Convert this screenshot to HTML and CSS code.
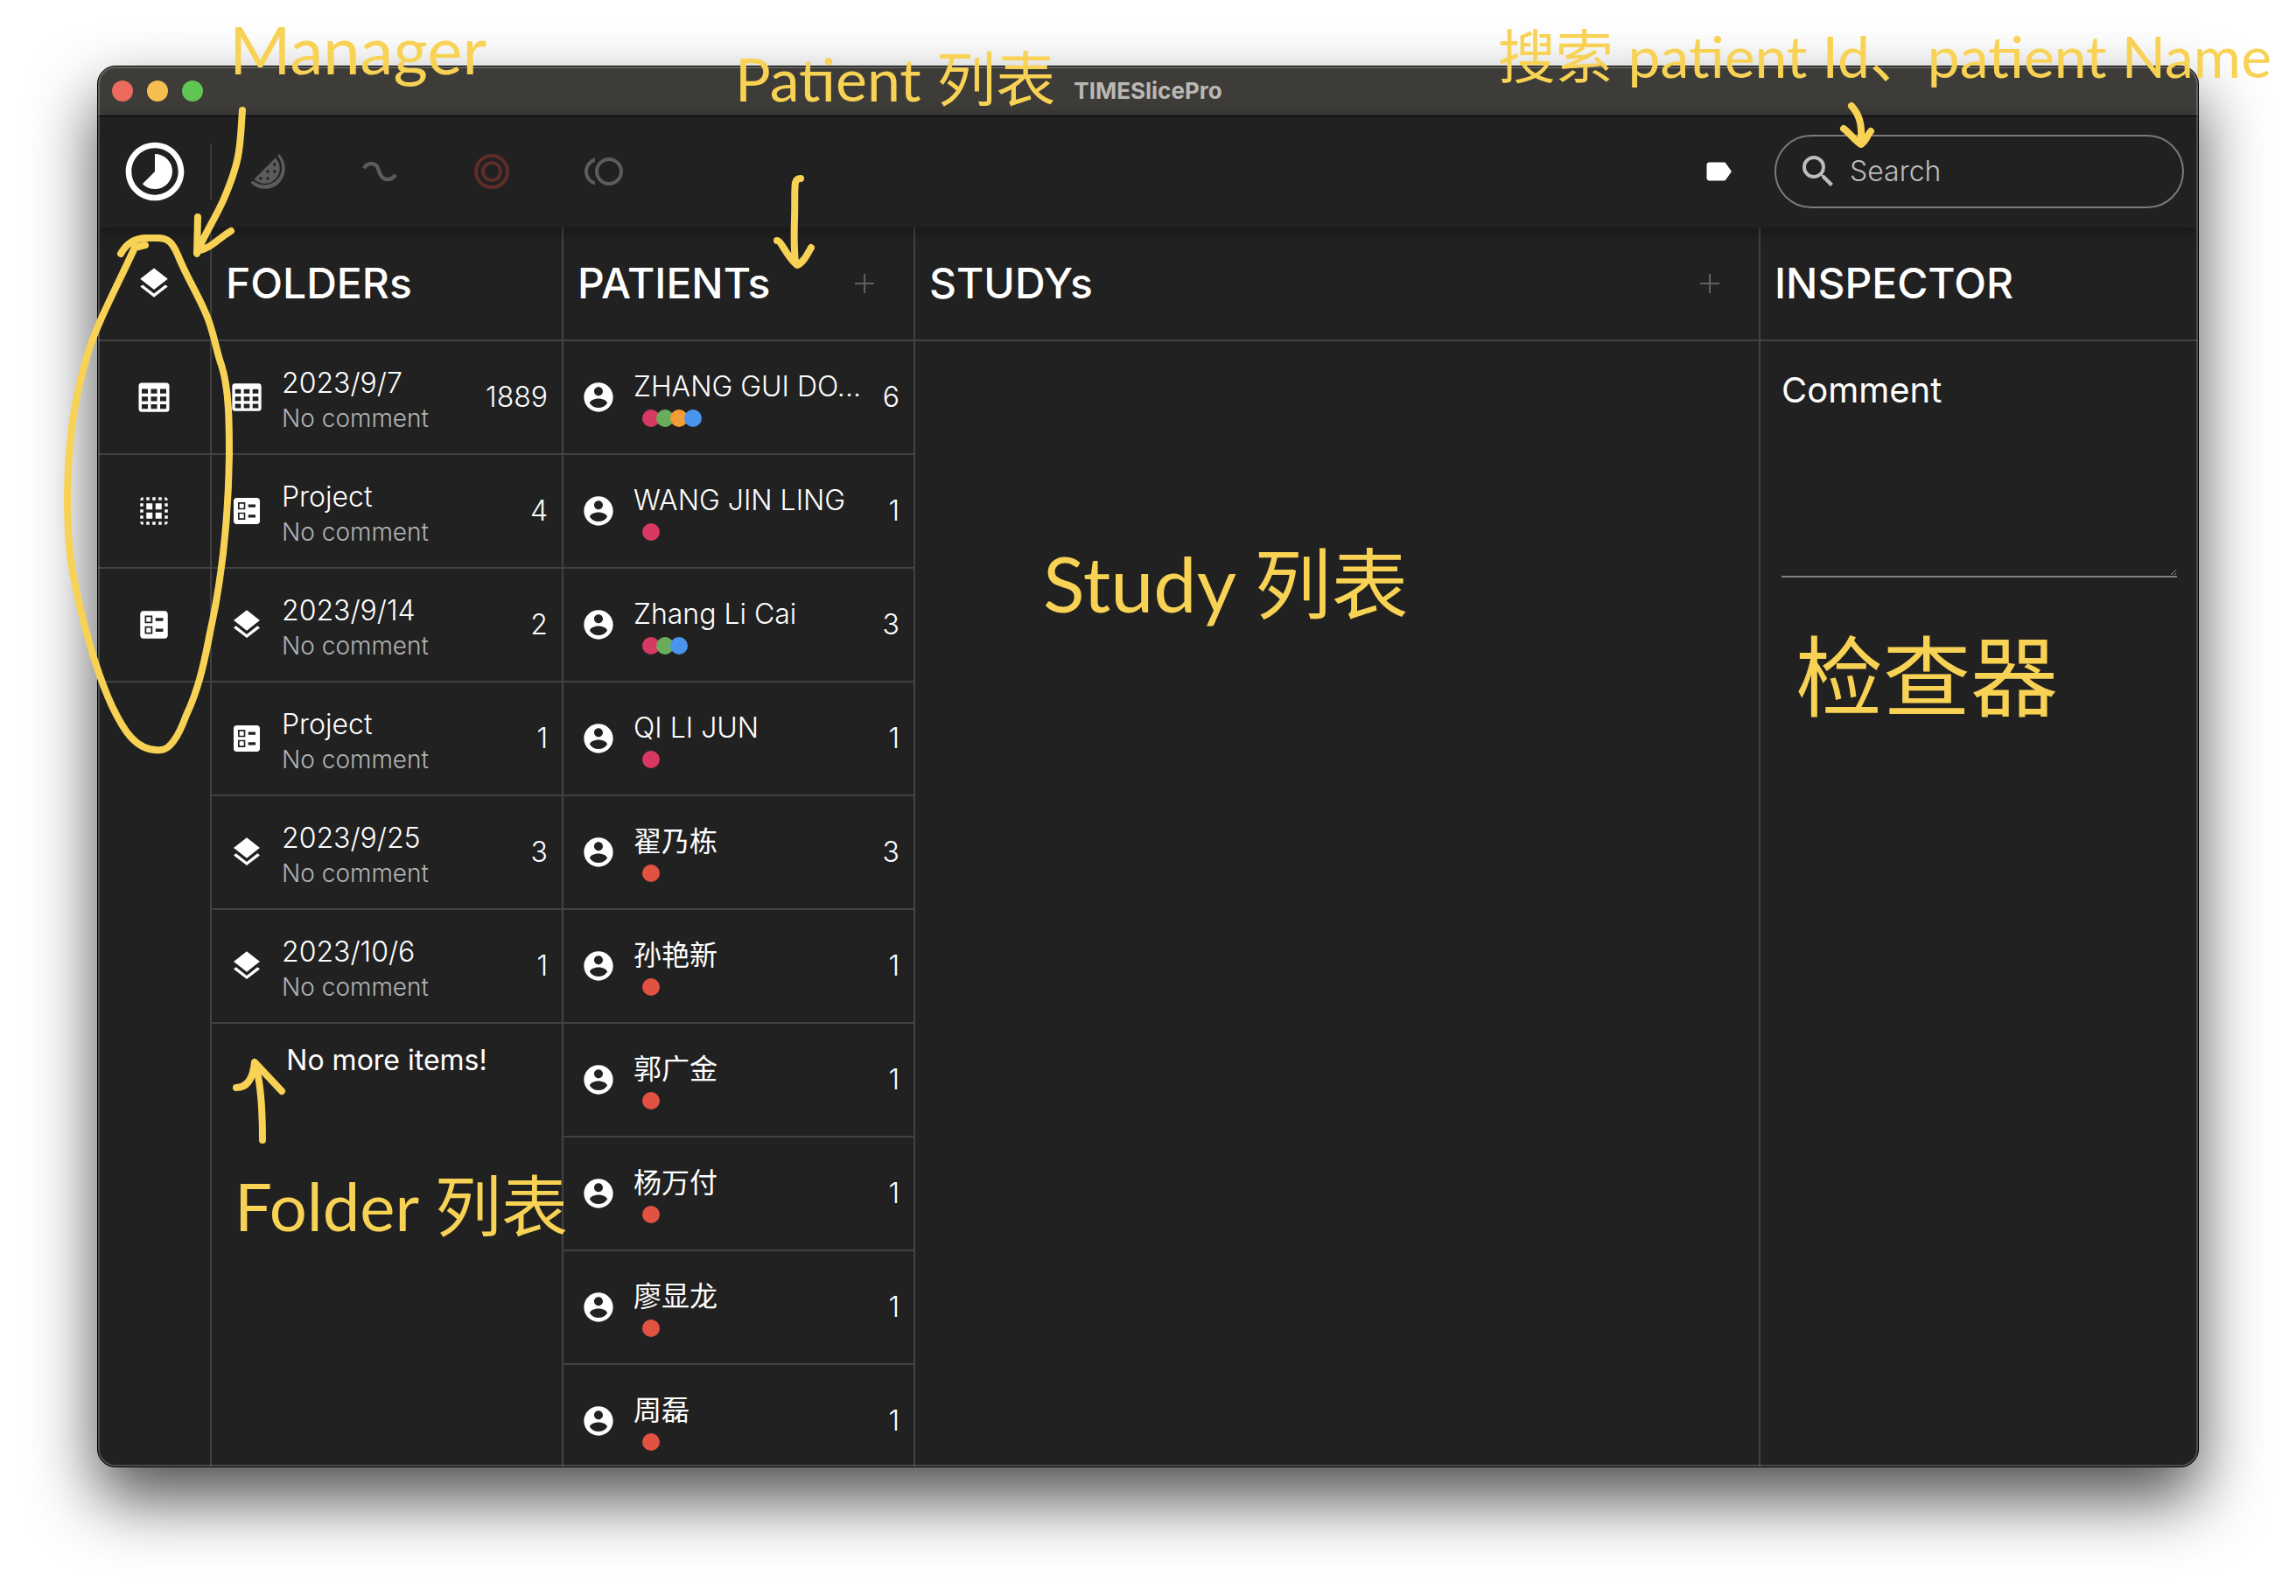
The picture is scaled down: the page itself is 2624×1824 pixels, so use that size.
FILE: index.html
```html
<!DOCTYPE html>
<html lang="zh-CN">
<head>
<meta charset="utf-8">
<title>TIMESlicePro</title>
<link rel="stylesheet" href="styles.css">
</head>
<body>
<svg class="sprite" aria-hidden="true">
  <symbol id="timelapse" viewBox="0 0 24 24"><path d="M16.24 7.76C15.07 6.59 13.54 6 12 6v6l-4.24 4.24c2.34 2.34 6.14 2.34 8.49 0 2.34-2.34 2.34-6.14-.01-8.48zM12 2C6.48 2 2 6.48 2 12s4.48 10 10 10 10-4.48 10-10S17.52 2 12 2zm0 18c-4.42 0-8-3.58-8-8s3.58-8 8-8 8 3.58 8 8-3.58 8-8 8z"/></symbol>
  <symbol id="melon" viewBox="0 0 24 24"><path fill-rule="evenodd" d="M16.4 4.2 4.2 16.4a8.6 8.6 0 0 0 12.2-.1 8.6 8.6 0 0 0 0-12.1zM15.9 7.1a.9.9 0 1 1 0 1.8.9.9 0 0 1 0-1.8zM12 11.1a.9.9 0 1 1 0 1.8.9.9 0 0 1 0-1.8zm3.900 0a.9.9 0 1 1 0 1.8.9.9 0 0 1 0-1.8zM8 15.1a.9.9 0 1 1 0 1.8.9.9 0 0 1 0-1.8zm4 0a.9.9 0 1 1 0 1.8.9.9 0 0 1 0-1.8z"/><path d="M18.6 2l-1 1.2c3.4 3.800 3.300 9.900-.4 13.600s-9.800 3.800-13.700.5L2.200 18.500c4.700 4.500 11.800 4.600 16.300.1S23 6.800 18.600 2z"/></symbol>
  <symbol id="wave" viewBox="0 0 24 24"><path fill="none" stroke="currentColor" stroke-width="2.200" d="M3 10.200C5 6.600 9.800 6.800 11 10.200c.7 2 1 3.400 2 4.600 2 2.500 6 2.200 8-.9"/></symbol>
  <symbol id="rings" viewBox="0 0 24 24"><g fill="none" stroke="currentColor" stroke-width="2"><circle cx="12" cy="12" r="9"/><circle cx="12" cy="12" r="5"/></g></symbol>
  <symbol id="circles" viewBox="0 0 24 24"><path d="M15 4a8 8 0 0 1 8 8 8 8 0 0 1-8 8 8 8 0 0 1-8-8 8 8 0 0 1 8-8m0 2a6 6 0 0 0-6 6 6 6 0 0 0 6 6 6 6 0 0 0 6-6 6 6 0 0 0-6-6M3 12c0 2.610 1.670 4.830 4 5.650v2.090C3.550 18.850 1 15.730 1 12s2.550-6.850 6-7.740v2.090C4.670 7.170 3 9.390 3 12z"/></symbol>
  <symbol id="label" viewBox="0 0 24 24"><path d="M17.630 5.840C17.270 5.330 16.670 5 16 5L5 5.010C3.900 5.010 3 5.900 3 7v10c0 1.100.9 1.990 2 1.990L16 19c.67 0 1.270-.33 1.630-.84L22 12l-4.370-6.160z"/></symbol>
  <symbol id="magnify" viewBox="0 0 24 24"><path d="M15.500 14h-.79l-.28-.27A6.470 6.470 0 0 0 16 9.500 6.500 6.500 0 1 0 9.500 16c1.610 0 3.090-.59 4.230-1.570l.27.28v.79l5 4.990L20.490 19l-4.990-5zm-6 0C7.010 14 5 11.990 5 9.500S7.010 5 9.500 5 14 7.010 14 9.500 11.990 14 9.500 14z"/></symbol>
  <symbol id="layers" viewBox="0 0 24 24"><path d="M11.990 18.540l-7.370-5.730L3 14.070l9 7 9-7-1.630-1.270-7.380 5.740zM12 16l7.360-5.730L21 9l-9-7-9 7 1.630 1.270L12 16z"/></symbol>
  <symbol id="table" viewBox="0 0 24 24"><path fill-rule="evenodd" d="M4 2.500h16a2 2 0 0 1 2 2v15a2 2 0 0 1-2 2H4a2 2 0 0 1-2-2v-15a2 2 0 0 1 2-2zM4 6.500v3h4v-3zm6 0v3h4v-3zm6 0v3h4v-3zM4 11.500v3h4v-3zm6 0v3h4v-3zm6 0v3h4v-3zM4 16.500v3h4v-3zm6 0v3h4v-3zm6 0v3h4v-3z"/></symbol>
  <symbol id="select" viewBox="0 0 24 24"><path d="M3 5a2 2 0 0 1 2-2v2zM7 3h2v2H7zM11 3h2v2h-2zM15 3h2v2h-2zM19 3a2 2 0 0 1 2 2h-2zM3 7h2v2H3zM3 11h2v2H3zM3 15h2v2H3zM19 7h2v2h-2zM19 11h2v2h-2zM19 15h2v2h-2zM3 19h2v2a2 2 0 0 1-2-2zM7 19h2v2H7zM11 19h2v2h-2zM15 19h2v2h-2zM19 19h2a2 2 0 0 1-2 2zM7 7h4v4H7zM13 7h4v4h-4zM7 13h4v4H7zM13 13h4v4h-4z"/></symbol>
  <symbol id="ballot" viewBox="0 0 24 24"><path d="M13 9.500h5v-2h-5v2zm0 7h5v-2h-5v2zm6 4.500H5c-1.100 0-2-.9-2-2V5c0-1.100.9-2 2-2h14c1.100 0 2 .9 2 2v14c0 1.100-.9 2-2 2zM6 11h5V6H6v5zm1-4h3v3H7V7zM6 18h5v-5H6v5zm1-4h3v3H7v-3z"/></symbol>
  <symbol id="person" viewBox="0 0 24 24"><path d="M12 2C6.480 2 2 6.480 2 12s4.480 10 10 10 10-4.480 10-10S17.520 2 12 2zm0 3c1.660 0 3 1.340 3 3s-1.340 3-3 3-3-1.340-3-3 1.340-3 3-3zm0 14.200c-2.500 0-4.710-1.280-6-3.220.03-1.990 4-3.080 6-3.080 1.990 0 5.970 1.090 6 3.080-1.290 1.940-3.500 3.220-6 3.220z"/></symbol>
  <symbol id="plus" viewBox="0 0 24 24"><path d="M11 1h2v10h10v2H13v10h-2V13H1v-2h10z"/></symbol>
</svg>

<main class="window">
  <header class="titlebar">
    <div class="lights"><span class="light red"></span><span class="light amber"></span><span class="light green"></span></div>
    <h1 class="app-name">TIMESlicePro</h1>
  </header>

  <div class="toolbar">
    <button class="brand" aria-label="Home"><svg class="icon-brand"><use href="#timelapse"/></svg></button>
    <div class="tools">
      <button class="tool" aria-label="Slice"><svg class="icon-tool"><use href="#melon"/></svg></button>
      <button class="tool" aria-label="Wave"><svg class="icon-tool"><use href="#wave"/></svg></button>
      <button class="tool tool-red" aria-label="Rings"><svg class="icon-tool"><use href="#rings"/></svg></button>
      <button class="tool" aria-label="Overlap"><svg class="icon-tool"><use href="#circles"/></svg></button>
    </div>
    <button class="tag" aria-label="Label"><svg class="icon-tag"><use href="#label"/></svg></button>
    <label class="search">
      <svg class="icon-tool"><use href="#magnify"/></svg>
      <input class="search-input" type="text" placeholder="Search" aria-label="Search">
    </label>
  </div>

  <div class="columns">
    <nav class="manager">
      <button class="manager-item" aria-label="Layers"><svg class="icon-manager"><use href="#layers"/></svg></button>
      <button class="manager-item" aria-label="Table"><svg class="icon-manager"><use href="#table"/></svg></button>
      <button class="manager-item" aria-label="Selection"><svg class="icon-manager"><use href="#select"/></svg></button>
      <button class="manager-item" aria-label="Project"><svg class="icon-manager"><use href="#ballot"/></svg></button>
    </nav>

    <section class="column">
      <div class="column-head"><h2 class="column-title">FOLDERs</h2></div>
      <ul class="list">
        <li class="row"><svg class="icon-row"><use href="#table"/></svg><div class="row-text"><span class="name">2023/9/7</span><span class="note">No comment</span></div><span class="count">1889</span></li>
        <li class="row"><svg class="icon-row"><use href="#ballot"/></svg><div class="row-text"><span class="name">Project</span><span class="note">No comment</span></div><span class="count">4</span></li>
        <li class="row"><svg class="icon-row"><use href="#layers"/></svg><div class="row-text"><span class="name">2023/9/14</span><span class="note">No comment</span></div><span class="count">2</span></li>
        <li class="row"><svg class="icon-row"><use href="#ballot"/></svg><div class="row-text"><span class="name">Project</span><span class="note">No comment</span></div><span class="count">1</span></li>
        <li class="row"><svg class="icon-row"><use href="#layers"/></svg><div class="row-text"><span class="name">2023/9/25</span><span class="note">No comment</span></div><span class="count">3</span></li>
        <li class="row"><svg class="icon-row"><use href="#layers"/></svg><div class="row-text"><span class="name">2023/10/6</span><span class="note">No comment</span></div><span class="count">1</span></li>
      </ul>
      <p class="list-end">No more items!</p>
    </section>

    <section class="column">
      <div class="column-head"><h2 class="column-title">PATIENTs</h2><button class="add" aria-label="Add patient"><svg class="icon-add"><use href="#plus"/></svg></button></div>
      <ul class="list">
        <li class="row"><svg class="icon-row"><use href="#person"/></svg><div class="row-text patient"><span class="name">ZHANG GUI DO...</span><span class="dots"><i class="dot pink"></i><i class="dot lime"></i><i class="dot orange"></i><i class="dot blue"></i></span></div><span class="count">6</span></li>
        <li class="row"><svg class="icon-row"><use href="#person"/></svg><div class="row-text patient"><span class="name">WANG JIN LING</span><span class="dots"><i class="dot pink"></i></span></div><span class="count">1</span></li>
        <li class="row"><svg class="icon-row"><use href="#person"/></svg><div class="row-text patient"><span class="name">Zhang Li Cai</span><span class="dots"><i class="dot pink"></i><i class="dot lime"></i><i class="dot blue"></i></span></div><span class="count">3</span></li>
        <li class="row"><svg class="icon-row"><use href="#person"/></svg><div class="row-text patient"><span class="name">QI LI JUN</span><span class="dots"><i class="dot pink"></i></span></div><span class="count">1</span></li>
        <li class="row"><svg class="icon-row"><use href="#person"/></svg><div class="row-text patient"><span class="name hanzi">翟乃栋</span><span class="dots"><i class="dot coral"></i></span></div><span class="count">3</span></li>
        <li class="row"><svg class="icon-row"><use href="#person"/></svg><div class="row-text patient"><span class="name hanzi">孙艳新</span><span class="dots"><i class="dot coral"></i></span></div><span class="count">1</span></li>
        <li class="row"><svg class="icon-row"><use href="#person"/></svg><div class="row-text patient"><span class="name hanzi">郭广金</span><span class="dots"><i class="dot coral"></i></span></div><span class="count">1</span></li>
        <li class="row"><svg class="icon-row"><use href="#person"/></svg><div class="row-text patient"><span class="name hanzi">杨万付</span><span class="dots"><i class="dot coral"></i></span></div><span class="count">1</span></li>
        <li class="row"><svg class="icon-row"><use href="#person"/></svg><div class="row-text patient"><span class="name hanzi">廖显龙</span><span class="dots"><i class="dot coral"></i></span></div><span class="count">1</span></li>
        <li class="row"><svg class="icon-row"><use href="#person"/></svg><div class="row-text patient"><span class="name hanzi">周磊</span><span class="dots"><i class="dot coral"></i></span></div><span class="count">1</span></li>
      </ul>
    </section>

    <section class="column column-study">
      <div class="column-head"><h2 class="column-title">STUDYs</h2><button class="add" aria-label="Add study"><svg class="icon-add"><use href="#plus"/></svg></button></div>
    </section>

    <section class="column column-inspector">
      <div class="column-head"><h2 class="column-title">INSPECTOR</h2></div>
      <div class="inspector">
        <label class="comment-label" for="comment">Comment</label>
        <textarea class="comment" id="comment"></textarea>
      </div>
    </section>
  </div>
</main>

<!-- Annotations pinned over the window -->
<p class="mark mark-manager">Manager</p>
<p class="mark mark-patient">Patient 列表</p>
<p class="mark mark-search">搜索 patient Id、patient Name</p>
<p class="mark mark-study">Study 列表</p>
<p class="mark mark-inspector">检查器</p>
<p class="mark mark-folder">Folder 列表</p>
<svg class="pen pen-left" viewBox="0 0 960 1340" aria-hidden="true">
  <path d="M138 290C144 279 154 272 168 272H180C192 272 197 277 203 291C215 321 230 342 239 368C247 392 248 404 253 417C262 445 262 485 262 520C261 590 254 660 240 723C233 760 226 790 213 817C204 842 194 857 184 857C155 860 140 832 128 807C110 768 92 705 83 653C78 625 77 595 77 567C78 500 85 455 100 405C112 367 130 335 154 283L166 280"/>
  <path d="M277 126C274 167 276 180 256 227C246 250 232 270 225 290L226 248M264 264C250 272 240 285 225 287"/>
  <path d="M915 204C906 204 909 212 908 250C907 280 908 290 909 300M888 275C893 275 900 295 911 303C918 300 922 292 927 283"/>
  <path d="M300 1303C300 1260 297 1232 291 1214C289 1234 282 1243 270 1243M291 1214L322 1247"/>
</svg>
<svg class="pen pen-right" viewBox="0 0 60 60" aria-hidden="true">
  <path d="M16 7C25 17 28 28 27 45M7 33C14 38 20 47 27 51C34 46 34 40 38 36"/>
</svg>
</body>
</html>
```
FILE: styles.css
```css
* { box-sizing: border-box; }

body {
  margin: 0;
  padding: 75px 111px 147px;
  position: relative;
  overflow: hidden;
  background: #fff;
  color: #fff;
  font-family: Inter, "Noto Sans CJK SC", sans-serif;
  font-size: 32px;
  line-height: 40px;
}

button, input, textarea { font: inherit; color: inherit; background: none; border: 0; padding: 0; margin: 0; }
button { display: flex; align-items: center; justify-content: center; }
h1, h2, p, ul { margin: 0; padding: 0; }
svg { display: block; fill: currentColor; flex: none; }
.sprite { position: absolute; width: 0; height: 0; }

.window {
  display: flex;
  flex-direction: column;
  height: calc(100vh - 222px);
  border: 1px solid #000;
  border-radius: 21px;
  background: #212121;
  overflow: hidden;
  position: relative;
  box-shadow: 0 36px 76px rgba(0, 0, 0, .69);
}
.window::after {
  content: "";
  position: absolute;
  inset: 0;
  border: 2px solid rgba(255, 255, 255, .2);
  border-radius: 20px;
  pointer-events: none;
  z-index: 3;
}

.titlebar {
  flex: none;
  display: grid;
  grid-template-columns: 1fr auto 1fr;
  align-items: center;
  height: 57px;
  padding: 0 16px;
  background: #3e3c38;
  border-bottom: 1px solid #000;
}
.lights { display: flex; gap: 16px; }
.light { width: 24px; height: 24px; border-radius: 50%; }
.red { background: #ed6a5e; }
.amber { background: #f5bf4f; }
.green { background: #61c554; }
.app-name { font-size: 26px; line-height: 32px; font-weight: 700; color: #b9b8b5; }

.toolbar {
  flex: none;
  display: flex;
  align-items: center;
  height: 127px;
  padding: 0 16px 2px 0;
  background: #212121;
  box-shadow: 0 2px 16px rgba(0, 0, 0, .4);
  position: relative;
  z-index: 2;
}
.brand { width: 130px; height: 64px; padding-left: 2px; border-right: 2px solid #3c3c3c; }
.icon-brand { width: 80px; height: 80px; }
.tools { flex: 1; display: flex; color: #5c5c5c; }
.tool { width: 128px; height: 64px; }
.tool-red { color: #5e2d28; }
.icon-tool { width: 48px; height: 48px; }
.icon-tag { width: 36px; height: 36px; }
.tag { margin-right: 46px; }
.search {
  display: flex;
  align-items: center;
  gap: 12px;
  width: 468px;
  height: 84px;
  padding: 0 24px;
  border: 2px solid #7a7a7a;
  border-radius: 42px;
  color: #bdbdbd;
}
.search-input { flex: 1; min-width: 0; outline: 0; font-size: 32px; font-weight: 300; }
.search-input::placeholder { color: #bdbdbd; opacity: 1; }

.columns { flex: 1; min-height: 0; display: flex; }
.manager { flex: none; width: 130px; border-right: 2px solid #424242; }
.manager-item { width: 100%; height: 130px; border-bottom: 2px solid #424242; }
.icon-manager { width: 42px; height: 42px; }

.column { flex: none; width: 402px; border-right: 2px solid #424242; }
.column-study { flex: 1; min-width: 0; }
.column-inspector { width: 500px; border-right: 0; }
.column-head {
  display: flex;
  align-items: center;
  justify-content: space-between;
  height: 130px;
  padding: 0 32px 0 16px;
  border-bottom: 2px solid #424242;
}
.column-title { font-size: 48px; line-height: 56px; font-weight: 500; }
.add { width: 48px; height: 48px; color: #606060; }
.icon-add { width: 24px; height: 24px; }

.list { list-style: none; }
.row {
  display: flex;
  align-items: center;
  height: 130px;
  padding: 0 16px 0 20px;
  border-bottom: 2px solid #424242;
}
.icon-row { width: 40px; height: 40px; }
.row-text { flex: 1; min-width: 0; display: flex; flex-direction: column; margin: 8px 8px 0 20px; }
.patient { margin-top: 2px; }
.name { white-space: nowrap; font-weight: 300; }
.hanzi { font-weight: 400; }
.note { font-size: 28px; font-weight: 300; color: #b3b3b3; }
.count { font-weight: 300; }
.dots { display: flex; padding: 6px 0 0 10px; }
.dot { width: 20px; height: 20px; border-radius: 50%; margin-right: -4px; }
.pink { background: #d83963; }
.lime { background: #69ad5c; }
.orange { background: #f29d38; }
.blue { background: #4b94ee; }
.coral { background: #e25241; }
.list-end { padding-top: 22px; text-align: center; }

.inspector { padding: 28px 24px; display: flex; flex-direction: column; }
.comment-label { font-size: 40px; line-height: 56px; }
.comment { height: 186px; border-bottom: 2px solid #808080; outline: 0; resize: vertical; }

.mark {
  position: absolute;
  color: #f8d254;
  font-family: Lato, "Noto Sans CJK SC", sans-serif;
  font-size: 76px;
  line-height: 100px;
  white-space: nowrap;
  z-index: 4;
}
.mark-manager { left: 262px; top: 6px; }
.mark-patient { left: 840px; top: 40px; font-size: 68px; }
.mark-search { right: 28px; top: 14px; font-size: 66px; }
.mark-study { left: 1192px; top: 616px; font-size: 88px; }
.mark-inspector { right: 272px; top: 722px; font-size: 100px; }
.mark-folder { left: 268px; top: 1328px; }
.pen { position: absolute; fill: none; stroke: #f8d254; stroke-width: 8; stroke-linecap: round; stroke-linejoin: round; pointer-events: none; z-index: 4; }
.pen-left { left: 0; top: 0; width: 960px; height: 1340px; }
.pen-right { right: 464px; top: 114px; width: 60px; height: 60px; }
```
